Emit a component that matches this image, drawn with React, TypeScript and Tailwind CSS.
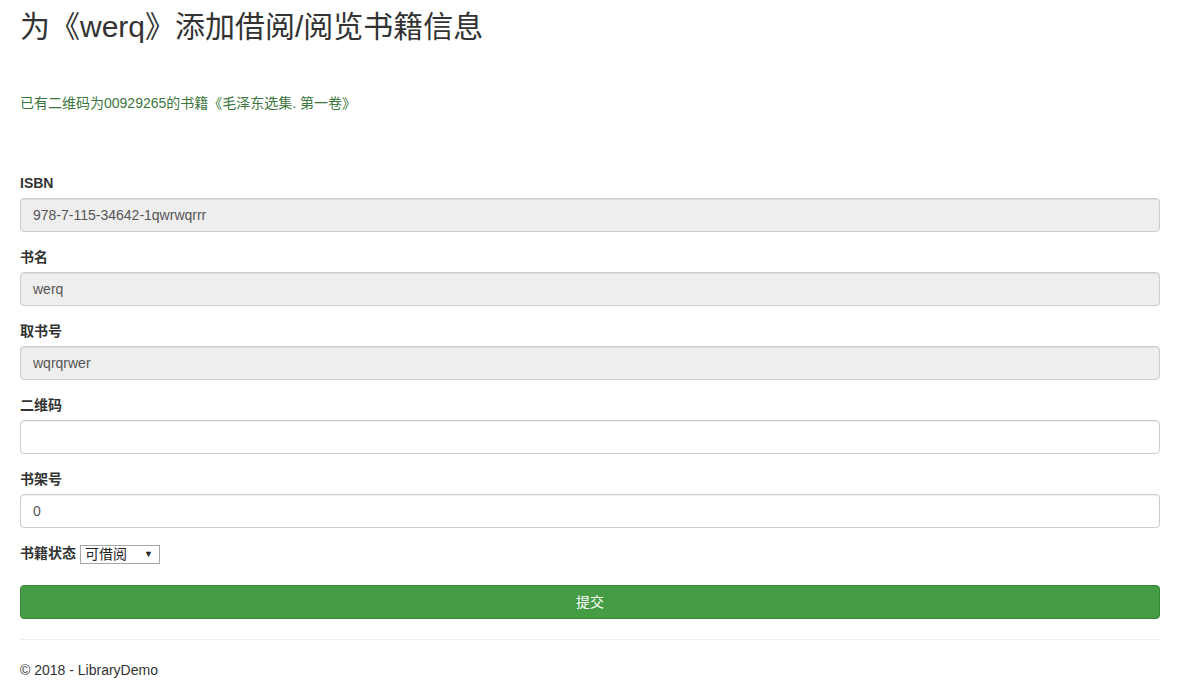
import React from "react";

const font = {
  fontFamily:
    '"Liberation Sans", Arial, "Noto Sans CJK SC", sans-serif',
};

function Group({ label, value, disabled }: { label: string; value: string; disabled?: boolean }) {
  return (
    <div className="mb-[15px]">
      <div className="h-[20px] mb-[5px] text-[14px] leading-[20px] font-bold text-[#333]">{label}</div>
      <div
        className={`h-[34px] w-full border border-[#ccc] rounded-[4px] px-[12px] text-[14px] leading-[32px] text-[#555] shadow-[inset_0_1px_1px_rgba(0,0,0,0.075)] ${
          disabled ? "bg-[#eee]" : "bg-white"
        }`}
      >
        {value}
      </div>
    </div>
  );
}

export default function App() {
  return (
    <div className="w-[1190px] h-[696px] bg-white text-[#333] overflow-hidden" style={font}>
      <div className="ml-[20px] w-[1140px]">
        <h2 className="pt-[10px] text-[30px] leading-[33px] font-normal text-[#333]">
          为《werq》添加借阅/阅览书籍信息
        </h2>
        <div className="mt-[50px] h-[20px] text-[14px] leading-[20px] text-[#3c763d]">
          已有二维码为00929265的书籍《毛泽东选集. 第一卷》
        </div>
        <div className="mt-[60px]">
          <Group label="ISBN" value="978-7-115-34642-1qwrwqrrr" disabled />
          <Group label="书名" value="werq" disabled />
          <Group label="取书号" value="wqrqrwer" disabled />
          <Group label="二维码" value="" />
          <Group label="书架号" value="0" />
          <div className="h-[20px] flex items-center">
            <span className="text-[14px] font-bold text-[#333]">书籍状态</span>
            <div className="relative ml-[4px] mt-[2px] w-[80px] h-[19px] border border-[#a6a6a6] bg-white text-[14px] leading-[17px] pl-[4px] text-[#222]">
              可借阅
              <span className="absolute right-[6px] top-[0px] text-[9px] leading-[17px]">▼</span>
            </div>
          </div>
          <div className="mt-[22px] h-[34px] rounded-[4px] bg-[#449d44] border border-[#398439] text-white text-[14px] leading-[32px] text-center">
            提交
          </div>
        </div>
        <div className="mt-[20px] border-t border-[#eee]" />
        <div className="mt-[20px] text-[14px] leading-[20px] text-[#333]">© 2018 - LibraryDemo</div>
      </div>
    </div>
  );
}
